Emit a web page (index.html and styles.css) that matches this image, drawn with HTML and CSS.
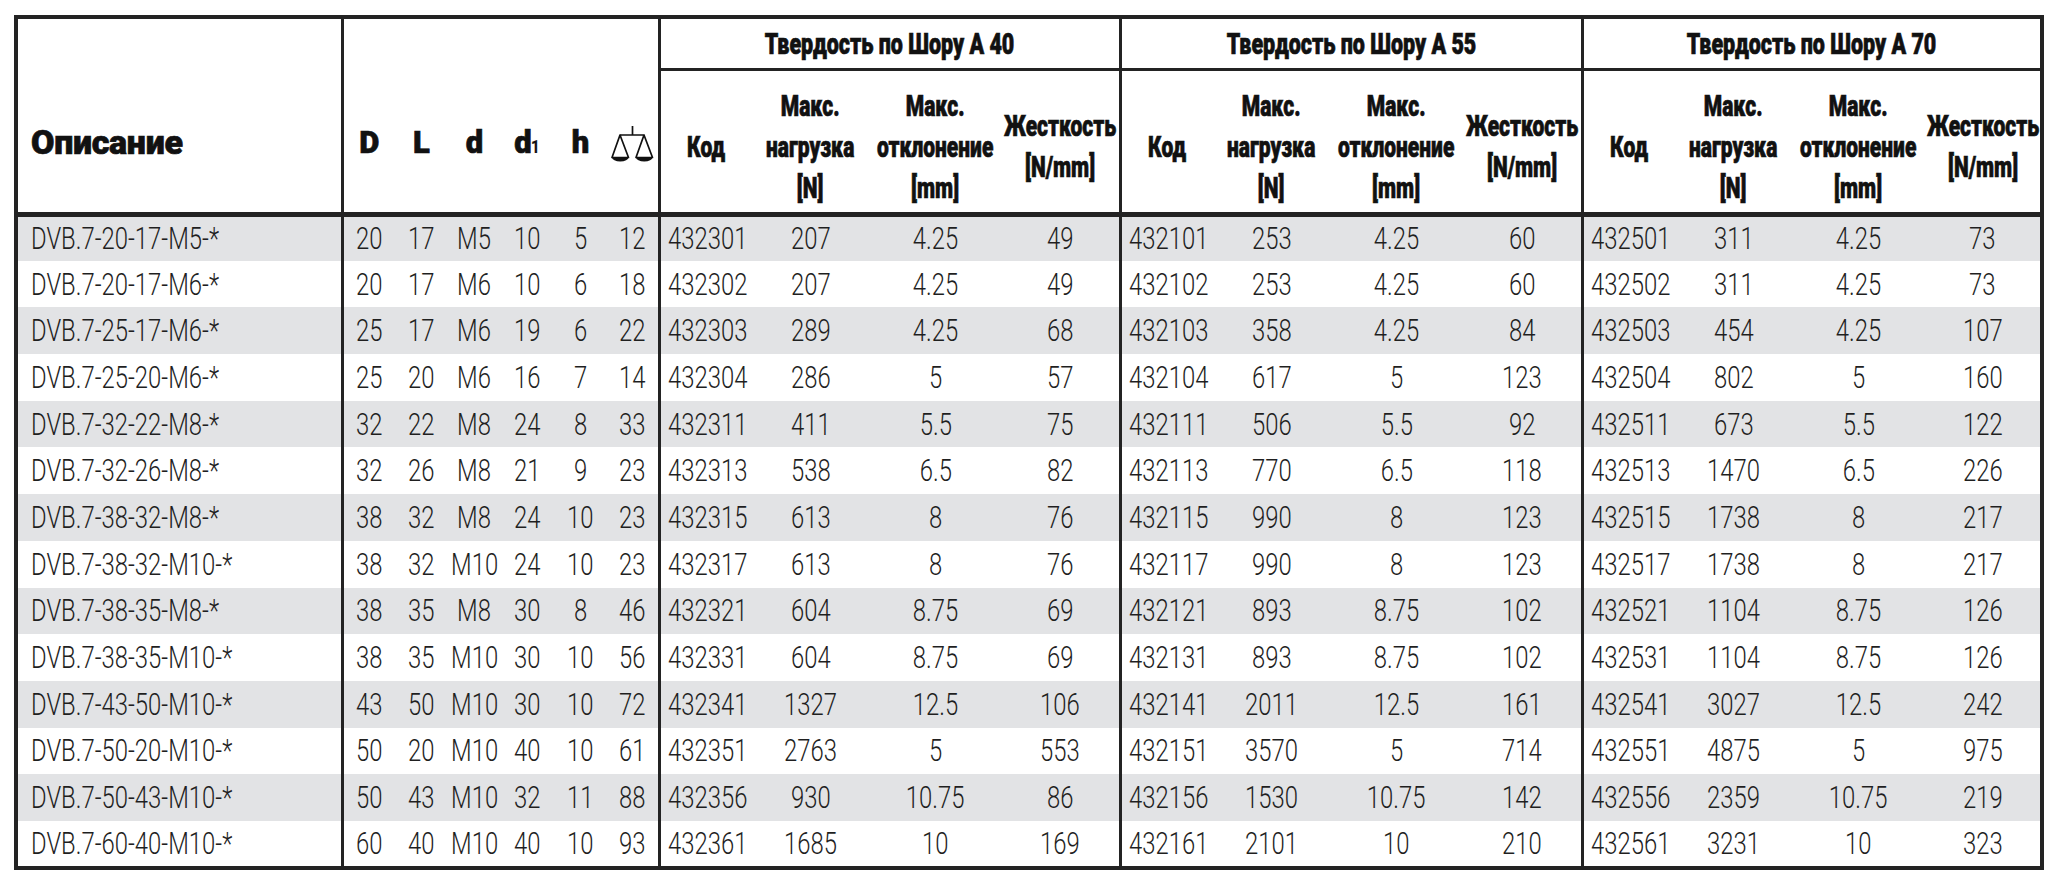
FILE: index.html
```html
<!DOCTYPE html>
<html lang="ru">
<head>
<meta charset="utf-8">
<title>DVB.7</title>
<link rel="stylesheet" href="styles.css">
</head>
<body>
<table class="spec">
<colgroup>
<col class="c-desc">
<col class="c-dim gs"><col class="c-dim"><col class="c-dim"><col class="c-dim"><col class="c-dim"><col class="c-dim2">
<col class="c-code gs"><col class="c-load"><col class="c-defl"><col class="c-stf">
<col class="c-code gs"><col class="c-load"><col class="c-defl"><col class="c-stf2">
<col class="c-code gs"><col class="c-load"><col class="c-defl"><col class="c-stf3">
</colgroup>
<thead>
<tr class="grp">
<th rowspan="2" class="h-desc">Описание</th>
<th rowspan="2" class="h-dim">D</th>
<th rowspan="2" class="h-dim">L</th>
<th rowspan="2" class="h-dim">d</th>
<th rowspan="2" class="h-dim">d<span class="sub1">1</span></th>
<th rowspan="2" class="h-dim">h</th>
<th rowspan="2" class="h-dim"><svg class="scale" viewBox="0 0 43 36" width="43" height="36" aria-label="масса"><path d="M21.5 0V9M9 9H33M9 9L1 31.5H17.5ZM33 9L25 31.5H41.5Z" fill="none" stroke="#111" stroke-width="1.7" stroke-linejoin="round"/><path d="M1 31.5A8.25 4 0 0 0 17.5 31.5ZM25 31.5A8.25 4 0 0 0 41.5 31.5Z" fill="#111"/></svg></th>
<th colspan="4" class="h-grp"><span class="t">Твердость по Шору А 40</span></th>
<th colspan="4" class="h-grp"><span class="t">Твердость по Шору А 55</span></th>
<th colspan="4" class="h-grp"><span class="t">Твердость по Шору А 70</span></th>
</tr>
<tr class="sub">
<th><span class="t">Код</span></th><th><span class="t">Макс.<br>нагрузка<br>[N]</span></th><th><span class="t">Макс.<br>отклонение<br>[mm]</span></th><th><span class="t">Жесткость<br>[N/mm]</span></th>
<th><span class="t">Код</span></th><th><span class="t">Макс.<br>нагрузка<br>[N]</span></th><th><span class="t">Макс.<br>отклонение<br>[mm]</span></th><th><span class="t">Жесткость<br>[N/mm]</span></th>
<th><span class="t">Код</span></th><th><span class="t">Макс.<br>нагрузка<br>[N]</span></th><th><span class="t">Макс.<br>отклонение<br>[mm]</span></th><th><span class="t">Жесткость<br>[N/mm]</span></th>
</tr>
</thead>
<tbody>
<tr><td class="l"><span class="t">DVB.7-20-17-M5-*</span></td><td><span class="t">20</span></td><td><span class="t">17</span></td><td><span class="t">M5</span></td><td><span class="t">10</span></td><td><span class="t">5</span></td><td><span class="t">12</span></td><td class="l"><span class="t">432301</span></td><td><span class="t">207</span></td><td><span class="t">4.25</span></td><td><span class="t">49</span></td><td class="l"><span class="t">432101</span></td><td><span class="t">253</span></td><td><span class="t">4.25</span></td><td><span class="t">60</span></td><td class="l"><span class="t">432501</span></td><td><span class="t">311</span></td><td><span class="t">4.25</span></td><td><span class="t">73</span></td></tr>
<tr><td class="l"><span class="t">DVB.7-20-17-M6-*</span></td><td><span class="t">20</span></td><td><span class="t">17</span></td><td><span class="t">M6</span></td><td><span class="t">10</span></td><td><span class="t">6</span></td><td><span class="t">18</span></td><td class="l"><span class="t">432302</span></td><td><span class="t">207</span></td><td><span class="t">4.25</span></td><td><span class="t">49</span></td><td class="l"><span class="t">432102</span></td><td><span class="t">253</span></td><td><span class="t">4.25</span></td><td><span class="t">60</span></td><td class="l"><span class="t">432502</span></td><td><span class="t">311</span></td><td><span class="t">4.25</span></td><td><span class="t">73</span></td></tr>
<tr><td class="l"><span class="t">DVB.7-25-17-M6-*</span></td><td><span class="t">25</span></td><td><span class="t">17</span></td><td><span class="t">M6</span></td><td><span class="t">19</span></td><td><span class="t">6</span></td><td><span class="t">22</span></td><td class="l"><span class="t">432303</span></td><td><span class="t">289</span></td><td><span class="t">4.25</span></td><td><span class="t">68</span></td><td class="l"><span class="t">432103</span></td><td><span class="t">358</span></td><td><span class="t">4.25</span></td><td><span class="t">84</span></td><td class="l"><span class="t">432503</span></td><td><span class="t">454</span></td><td><span class="t">4.25</span></td><td><span class="t">107</span></td></tr>
<tr><td class="l"><span class="t">DVB.7-25-20-M6-*</span></td><td><span class="t">25</span></td><td><span class="t">20</span></td><td><span class="t">M6</span></td><td><span class="t">16</span></td><td><span class="t">7</span></td><td><span class="t">14</span></td><td class="l"><span class="t">432304</span></td><td><span class="t">286</span></td><td><span class="t">5</span></td><td><span class="t">57</span></td><td class="l"><span class="t">432104</span></td><td><span class="t">617</span></td><td><span class="t">5</span></td><td><span class="t">123</span></td><td class="l"><span class="t">432504</span></td><td><span class="t">802</span></td><td><span class="t">5</span></td><td><span class="t">160</span></td></tr>
<tr><td class="l"><span class="t">DVB.7-32-22-M8-*</span></td><td><span class="t">32</span></td><td><span class="t">22</span></td><td><span class="t">M8</span></td><td><span class="t">24</span></td><td><span class="t">8</span></td><td><span class="t">33</span></td><td class="l"><span class="t">432311</span></td><td><span class="t">411</span></td><td><span class="t">5.5</span></td><td><span class="t">75</span></td><td class="l"><span class="t">432111</span></td><td><span class="t">506</span></td><td><span class="t">5.5</span></td><td><span class="t">92</span></td><td class="l"><span class="t">432511</span></td><td><span class="t">673</span></td><td><span class="t">5.5</span></td><td><span class="t">122</span></td></tr>
<tr><td class="l"><span class="t">DVB.7-32-26-M8-*</span></td><td><span class="t">32</span></td><td><span class="t">26</span></td><td><span class="t">M8</span></td><td><span class="t">21</span></td><td><span class="t">9</span></td><td><span class="t">23</span></td><td class="l"><span class="t">432313</span></td><td><span class="t">538</span></td><td><span class="t">6.5</span></td><td><span class="t">82</span></td><td class="l"><span class="t">432113</span></td><td><span class="t">770</span></td><td><span class="t">6.5</span></td><td><span class="t">118</span></td><td class="l"><span class="t">432513</span></td><td><span class="t">1470</span></td><td><span class="t">6.5</span></td><td><span class="t">226</span></td></tr>
<tr><td class="l"><span class="t">DVB.7-38-32-M8-*</span></td><td><span class="t">38</span></td><td><span class="t">32</span></td><td><span class="t">M8</span></td><td><span class="t">24</span></td><td><span class="t">10</span></td><td><span class="t">23</span></td><td class="l"><span class="t">432315</span></td><td><span class="t">613</span></td><td><span class="t">8</span></td><td><span class="t">76</span></td><td class="l"><span class="t">432115</span></td><td><span class="t">990</span></td><td><span class="t">8</span></td><td><span class="t">123</span></td><td class="l"><span class="t">432515</span></td><td><span class="t">1738</span></td><td><span class="t">8</span></td><td><span class="t">217</span></td></tr>
<tr><td class="l"><span class="t">DVB.7-38-32-M10-*</span></td><td><span class="t">38</span></td><td><span class="t">32</span></td><td><span class="t">M10</span></td><td><span class="t">24</span></td><td><span class="t">10</span></td><td><span class="t">23</span></td><td class="l"><span class="t">432317</span></td><td><span class="t">613</span></td><td><span class="t">8</span></td><td><span class="t">76</span></td><td class="l"><span class="t">432117</span></td><td><span class="t">990</span></td><td><span class="t">8</span></td><td><span class="t">123</span></td><td class="l"><span class="t">432517</span></td><td><span class="t">1738</span></td><td><span class="t">8</span></td><td><span class="t">217</span></td></tr>
<tr><td class="l"><span class="t">DVB.7-38-35-M8-*</span></td><td><span class="t">38</span></td><td><span class="t">35</span></td><td><span class="t">M8</span></td><td><span class="t">30</span></td><td><span class="t">8</span></td><td><span class="t">46</span></td><td class="l"><span class="t">432321</span></td><td><span class="t">604</span></td><td><span class="t">8.75</span></td><td><span class="t">69</span></td><td class="l"><span class="t">432121</span></td><td><span class="t">893</span></td><td><span class="t">8.75</span></td><td><span class="t">102</span></td><td class="l"><span class="t">432521</span></td><td><span class="t">1104</span></td><td><span class="t">8.75</span></td><td><span class="t">126</span></td></tr>
<tr><td class="l"><span class="t">DVB.7-38-35-M10-*</span></td><td><span class="t">38</span></td><td><span class="t">35</span></td><td><span class="t">M10</span></td><td><span class="t">30</span></td><td><span class="t">10</span></td><td><span class="t">56</span></td><td class="l"><span class="t">432331</span></td><td><span class="t">604</span></td><td><span class="t">8.75</span></td><td><span class="t">69</span></td><td class="l"><span class="t">432131</span></td><td><span class="t">893</span></td><td><span class="t">8.75</span></td><td><span class="t">102</span></td><td class="l"><span class="t">432531</span></td><td><span class="t">1104</span></td><td><span class="t">8.75</span></td><td><span class="t">126</span></td></tr>
<tr><td class="l"><span class="t">DVB.7-43-50-M10-*</span></td><td><span class="t">43</span></td><td><span class="t">50</span></td><td><span class="t">M10</span></td><td><span class="t">30</span></td><td><span class="t">10</span></td><td><span class="t">72</span></td><td class="l"><span class="t">432341</span></td><td><span class="t">1327</span></td><td><span class="t">12.5</span></td><td><span class="t">106</span></td><td class="l"><span class="t">432141</span></td><td><span class="t">2011</span></td><td><span class="t">12.5</span></td><td><span class="t">161</span></td><td class="l"><span class="t">432541</span></td><td><span class="t">3027</span></td><td><span class="t">12.5</span></td><td><span class="t">242</span></td></tr>
<tr><td class="l"><span class="t">DVB.7-50-20-M10-*</span></td><td><span class="t">50</span></td><td><span class="t">20</span></td><td><span class="t">M10</span></td><td><span class="t">40</span></td><td><span class="t">10</span></td><td><span class="t">61</span></td><td class="l"><span class="t">432351</span></td><td><span class="t">2763</span></td><td><span class="t">5</span></td><td><span class="t">553</span></td><td class="l"><span class="t">432151</span></td><td><span class="t">3570</span></td><td><span class="t">5</span></td><td><span class="t">714</span></td><td class="l"><span class="t">432551</span></td><td><span class="t">4875</span></td><td><span class="t">5</span></td><td><span class="t">975</span></td></tr>
<tr><td class="l"><span class="t">DVB.7-50-43-M10-*</span></td><td><span class="t">50</span></td><td><span class="t">43</span></td><td><span class="t">M10</span></td><td><span class="t">32</span></td><td><span class="t">11</span></td><td><span class="t">88</span></td><td class="l"><span class="t">432356</span></td><td><span class="t">930</span></td><td><span class="t">10.75</span></td><td><span class="t">86</span></td><td class="l"><span class="t">432156</span></td><td><span class="t">1530</span></td><td><span class="t">10.75</span></td><td><span class="t">142</span></td><td class="l"><span class="t">432556</span></td><td><span class="t">2359</span></td><td><span class="t">10.75</span></td><td><span class="t">219</span></td></tr>
<tr><td class="l"><span class="t">DVB.7-60-40-M10-*</span></td><td><span class="t">60</span></td><td><span class="t">40</span></td><td><span class="t">M10</span></td><td><span class="t">40</span></td><td><span class="t">10</span></td><td><span class="t">93</span></td><td class="l"><span class="t">432361</span></td><td><span class="t">1685</span></td><td><span class="t">10</span></td><td><span class="t">169</span></td><td class="l"><span class="t">432161</span></td><td><span class="t">2101</span></td><td><span class="t">10</span></td><td><span class="t">210</span></td><td class="l"><span class="t">432561</span></td><td><span class="t">3231</span></td><td><span class="t">10</span></td><td><span class="t">323</span></td></tr>
</tbody>
</table>
</body>
</html>
```
FILE: styles.css
```css
html, body {
  margin: 0;
  padding: 0;
  background: #ffffff;
}

body {
  font-family: Roboto, "Liberation Sans", "DejaVu Sans", sans-serif;
  color: #1d1d1d;
}

.spec {
  border-collapse: collapse;
  table-layout: fixed;
  width: 2030px;
  margin: 15px 0 0 14px;
  border: 4px solid #232323;
}

.c-desc { width: 326px; }
.c-dim { width: 53px; }
.c-dim2 { width: 52px; }
.c-code { width: 93px; }
.c-load { width: 117px; }
.c-defl { width: 133px; }
.c-stf { width: 118px; }
.c-stf2 { width: 119px; }
.c-stf3 { width: 117px; }

col.gs { border-left: 3px solid #232323; }

th, td {
  padding: 0;
  text-align: center;
  vertical-align: middle;
  white-space: nowrap;
}

.t {
  display: inline-block;
  margin: 0 -40px;
  transform: scaleX(0.77);
  transform-origin: 50% 50%;
}

/* header */
thead {
  border-bottom: 5px solid #232323;
  color: #111111;
}

thead th {
  -webkit-text-stroke: 0.7px #111111;
}

tr.grp { height: 52px; }
tr.sub { height: 145px; }

.h-desc {
  text-align: left;
  padding: 54px 0 0 13px;
  font-size: 34px;
  font-weight: 900;
  letter-spacing: -0.3px;
}

.h-dim {
  padding-top: 54px;
  font-size: 31px;
  font-weight: 900;
  line-height: 1;
}

.sub1 {
  font-size: 19px;
  font-weight: 700;
  display: inline-block;
  transform: scaleX(0.8);
  margin-left: -2px;
  -webkit-text-stroke: 0.2px #111111;
}

.scale {
  display: block;
  margin: 4px auto 0;
}

.h-grp {
  font-size: 29px;
  font-weight: 900;
  line-height: 1;
  padding-top: 2px;
}

.h-grp .t { transform: scaleX(0.74); }

tr.sub th {
  border-top: 3px solid #232323;
  font-size: 30px;
  font-weight: 900;
  line-height: 41px;
  padding-top: 10px;
}

tr.sub .t {
  line-height: 41px;
  transform: scaleX(0.7);
}

/* body */
tbody tr { height: 46.7px; }

tbody tr:nth-child(odd) { background: #e2e3e5; }

tbody td {
  font-size: 31px;
  font-weight: 300;
  line-height: 1;
  color: #1f1f1f;
}

td.l {
  text-align: left;
  padding-left: 7px;
}

td.l:first-child { padding-left: 13px; }

td.l .t {
  margin: 0;
  transform-origin: 0 50%;
}
```
